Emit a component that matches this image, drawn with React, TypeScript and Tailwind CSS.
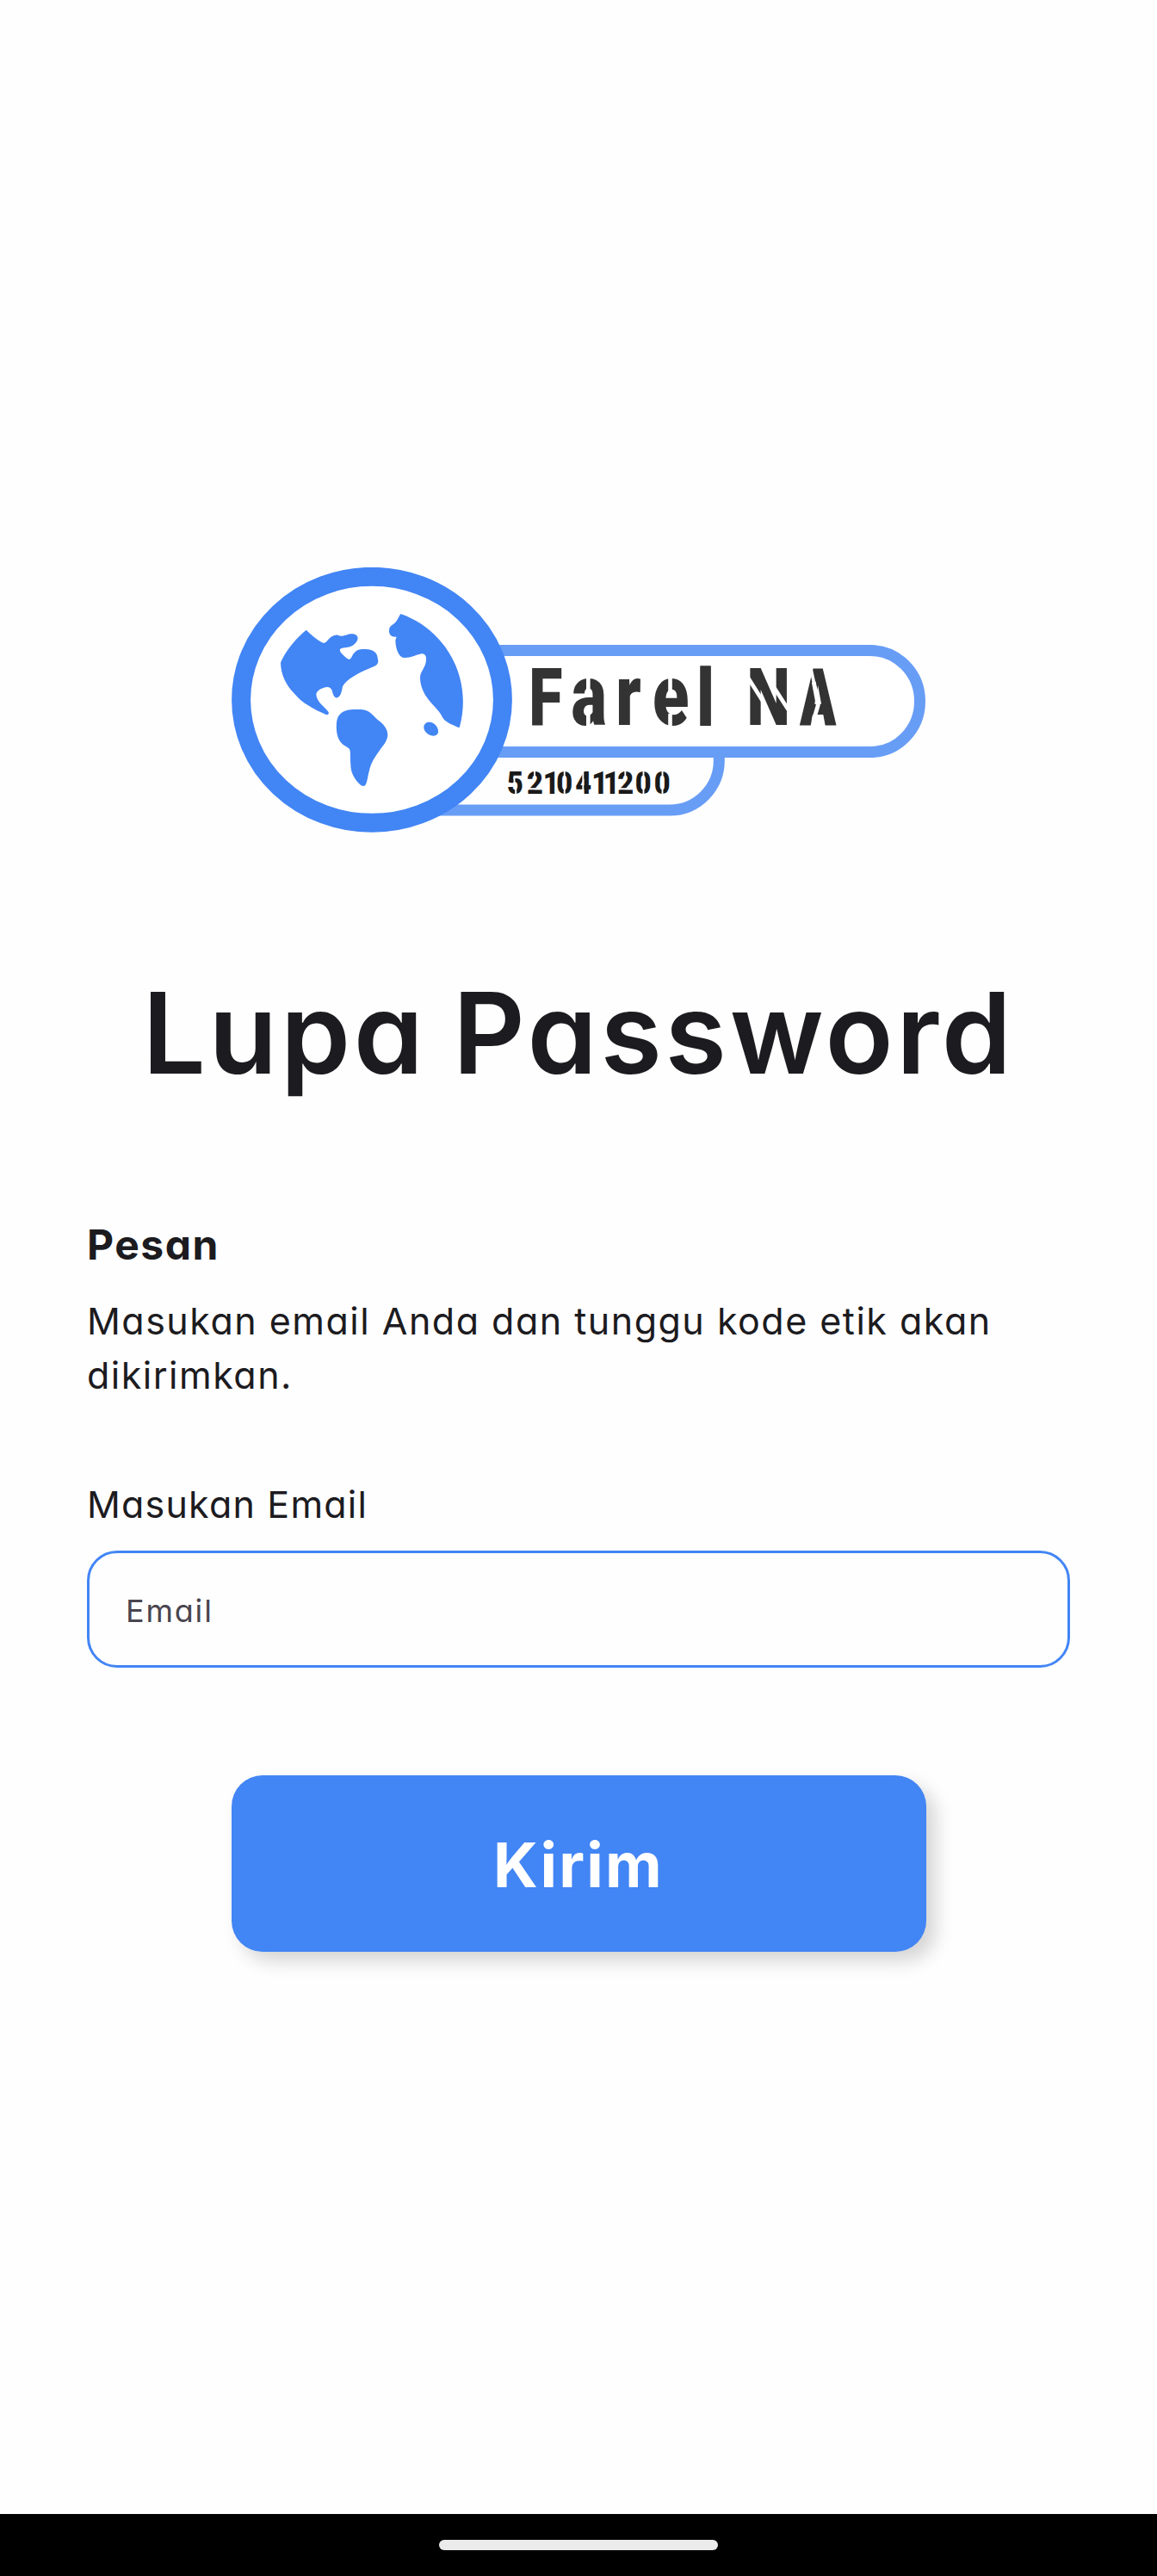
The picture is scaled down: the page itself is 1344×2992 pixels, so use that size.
const BLUE = "#4285f5";
const LIGHT_BLUE = "#689df6";

function Logo() {
  return (
    <svg viewBox="268 659 808 309" className="h-[309px] w-[808px]" role="img" aria-label="Farel NA 5210411200">
      {/* name plates */}
      <path d="M480 941H777.5A57.5 57.5 0 0 0 835.3 883V870" fill="none" stroke={LIGHT_BLUE} strokeWidth="13" />
      <path d="M480 755.5H1011A57.5 59 0 0 1 1011 873.5H480Z" fill="#fff" stroke={LIGHT_BLUE} strokeWidth="13" />

      <text transform="scale(.77 1)" y="842" fill="#333" fontSize="93" className="font-['Roboto'] font-black">
        <tspan x="797.8">F</tspan>
        <tspan fontSize="101" x="861.6 928.8 984.5">are</tspan>
        <tspan fontSize="90" x="1052" stroke="#333" strokeWidth="1.4">l</tspan>
        <tspan x="1078"> </tspan>
        <tspan x="1126.5">N</tspan>
        <tspan x="1206" className="[font-stretch:82%]">A</tspan>
      </text>
      {/* stencil bridges of the name */}
      <g fill="none" stroke="#fff">
        <path d="M683.3 785V804M683.3 827V845M778.5 785V804M778.5 829V845" strokeWidth="4.6" />
        <path d="M868.5 786.5L886.5 815M897.5 796L915.5 824" strokeWidth="4.6" />
        <path d="M941 772L947 800" strokeWidth="3.6" />
        <path d="M945.2 792L950.3 819L945 837" strokeWidth="4.8" />
      </g>

      <text
        transform="scale(.88 1)"
        y="922"
        x="669.3 695.5 716.8 734.3 759.5 781.1 796.3 815.2 838.3 863.3"
        fill="#1a1a1a"
        fontSize="37"
        className="font-['Roboto'] font-black"
      >
        5210411200
      </text>
      {/* stencil bridges of the number */}
      <path
        d="M655.7 894V924M747.5 894V924M769.5 894V924M599.2 912V924M597.5 903V910M621 894V903M726.3 894V903M677.3 894V924M611 916.2H630M717 916.2H735"
        fill="none"
        stroke="#fff"
        strokeWidth="1.9"
      />

      {/* globe */}
      <ellipse cx="432" cy="812.8" rx="151.9" ry="143" fill="#fff" stroke={BLUE} strokeWidth="22" />
      <g transform="translate(260 640) scale(.33333)" fill={BLUE}>
        <path d="M287 275C305 293 322 306 342 319C348 322 354 320 359 314C372 298 385 291 398 293C412 300 420 294 434 290C452 286 467 292 467 304C466 316 454 329 441 333C430 337 413 335 405 342C402 350 413 359 424 370C434 380 440 380 446 368C456 350 464 343 482 342C503 341 519 343 529 355C536 363 536 374 538 384C538 398 522 403 508 409C470 425 427 447 414 472C411 489 408 506 396 511C386 514 380 500 378 489C376 480 370 474 360 474C343 475 323 487 322 499C322 524 349 541 363 559C369 566 364 572 356 570C319 554 271 530 245 496C216 465 199 431 198 389C214 350 249 306 287 275Z" />
        <path d="M616 219C761 268 872 431 821 616C799 607 776 599 764 583C750 551 720 532 701 500C686 475 679 441 688 424C697 406 706 395 705 373C704 360 695 356 684 359C664 363 652 372 630 372C609 373 599 340 598 313C598 305 602 302 602 299C583 301 575 291 576 276C577 260 588 259 597 250C605 241 610 229 616 219Z" />
        <path d="M442 553C460 552 482 550 500 557C516 564 526 580 541 592C557 604 570 619 571 640C571 663 554 679 540 699C525 720 512 740 507 765C501 786 500 806 493 816C488 821 480 819 475 814C456 795 442 774 442 744C440 724 443 702 438 690C430 681 416 679 405 663C394 647 391 624 393 598C396 570 412 556 442 553Z" />
        <path d="M697 612C698 600 710 594 723 597C738 602 748 616 747 631C745 643 734 647 720 642C705 636 696 625 697 612Z" />
      </g>
    </svg>
  );
}

export default function App() {
  return (
    <div className="flex h-[2992px] w-full flex-col bg-[#fefefe] font-['Inter',sans-serif] text-[#1c1b1f] [font-feature-settings:'cv11']">
      <main className="flex flex-1 flex-col px-[101px] pt-[659px]">
        <div className="flex justify-center">
          <Logo />
        </div>
        <h1 className="mt-[162px] text-center text-[130px] leading-[140px] font-semibold tracking-[3.7px] whitespace-nowrap [word-spacing:-6px]">
          Lupa Password
        </h1>
        <h2 className="mt-[146px] text-[48px] leading-[60px] font-[650] tracking-[1.5px]">Pesan</h2>
        <p className="mt-[27px] text-[43px] leading-[63px] tracking-[1.5px]">
          Masukan email Anda dan tunggu kode etik akan dikirimkan.
        </p>
        <label htmlFor="email" className="mt-[88px] text-[43px] leading-[60px] tracking-[1.2px]">
          Masukan Email
        </label>
        <input
          id="email"
          type="email"
          placeholder="Email"
          className="mt-6 h-[136px] rounded-[35px] border-[3px] border-[#4285f5] bg-transparent px-[42px] pt-[3px] text-[36px] tracking-[1.8px] placeholder:text-[#49454f]"
        />
        <button
          type="button"
          className="mx-auto mt-[125px] h-[205px] w-[807px] rounded-[36px] bg-[#4285f5] pt-[2px] text-[72px] font-[650] tracking-[2.2px] text-white shadow-[11px_11px_21px_rgba(0,0,0,0.165)]"
        >
          Kirim
        </button>
      </main>
      <footer className="flex h-[72px] justify-center bg-black pt-[30px]">
        <div className="h-3 w-[324px] rounded-full bg-[#ebebeb]" />
      </footer>
    </div>
  );
}
